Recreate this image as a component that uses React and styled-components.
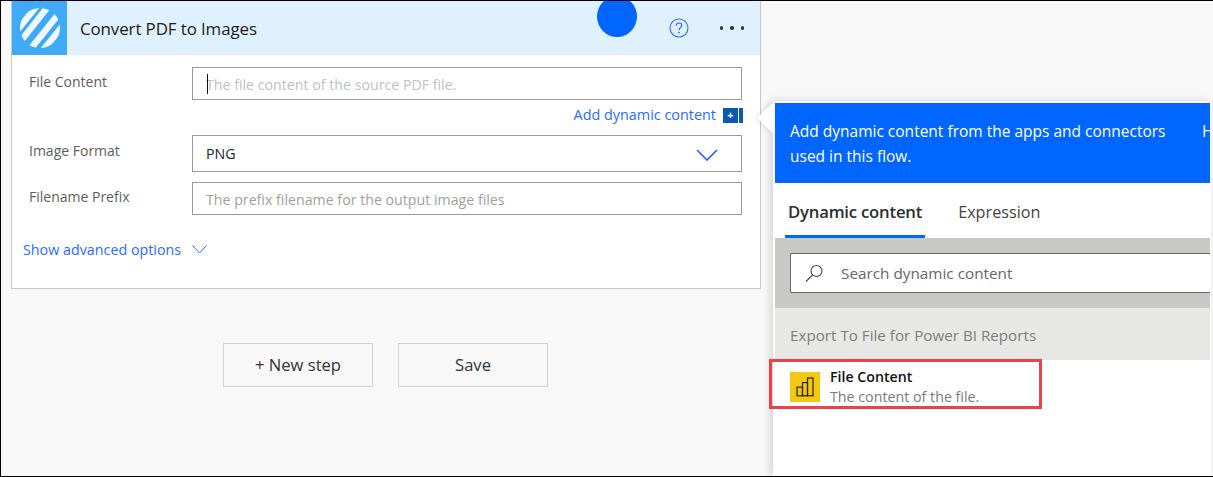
import React from "react";
import styled, { createGlobalStyle } from "styled-components";

const Global = createGlobalStyle`
  html, body { margin: 0; padding: 0; background: #f8f8f8; }
  * { box-sizing: border-box; }
`;

const font = `"Open Sans", "Noto Sans", "Liberation Sans", sans-serif`;

const Frame = styled.div`
  position: relative;
  width: 1213px;
  height: 477px;
  overflow: hidden;
  background: #f8f8f8;
  border: solid #000;
  border-width: 1px 0 1px 1px;
  font-family: ${font};
  padding: 0 0 0 10px;
`;

const Card = styled.section`
  width: 750px;
  height: 288px;
  background: #fff;
  border: 1px solid #c8c8c8;
  border-top: 0;
`;

const CardHeader = styled.header`
  position: relative;
  height: 54px;
  background: #dff0fe;
  display: flex;
  align-items: center;
  padding-right: 16px;
`;

const LogoBox = styled.div`
  width: 55px;
  height: 54px;
  background: #3eaaf9;
  display: flex;
  align-items: center;
  justify-content: center;
`;

const CardTitle = styled.h1`
  margin: 1px 0 0 13px;
  flex: 1;
  font-size: 16.9px;
  font-weight: 400;
  letter-spacing: -0.1px;
  color: #1c1c1c;
`;

const RedactDot = styled.div`
  position: absolute;
  left: 585px;
  top: -5px;
  width: 40px;
  height: 41px;
  border-radius: 50%;
  background: #0066ff;
`;

const HeaderActions = styled.div`
  display: flex;
  align-items: center;
  gap: 31px;
`;

const Dots = styled.div`
  display: flex;
  gap: 7px;
  span {
    width: 3.4px;
    height: 3.4px;
    border-radius: 50%;
    background: #333;
  }
`;

const Form = styled.div`
  padding: 12px 18px 0 17px;
`;

const Row = styled.div`
  display: grid;
  grid-template-columns: 163px 550px;
  margin-bottom: ${(p) => p.$mb || 0}px;
`;

const Label = styled.label`
  font-size: 14px;
  line-height: 18px;
  color: #5d5d5d;
  padding-top: ${(p) => p.$pt || 6}px;
`;

const Field = styled.div`
  height: ${(p) => p.$h || 33}px;
  border: 1px solid #999;
  background: #fff;
  display: flex;
  align-items: center;
  padding: ${(p) => (p.$value ? 0 : 2)}px 13px 0;
  font-size: 14.2px;
  color: ${(p) => (p.$value ? "#222" : "#a19f9d")};
  position: relative;
`;

const FaintText = styled.span`
  color: #c0bfc4;
`;

const Caret = styled.i`
  position: absolute;
  left: 14px;
  top: 6px;
  width: 1px;
  height: 20px;
  background: #111;
`;

const SelectChevron = styled.svg`
  position: absolute;
  right: 23px;
  top: 13px;
`;

const DynamicRow = styled.div`
  height: 35px;
  padding-bottom: 5px;
  display: flex;
  justify-content: flex-end;
  align-items: center;
  gap: 7px;
  width: 714px;
  font-size: 14.4px;
  color: #2b6bff;
  span:first-child {
    position: relative;
    top: -1px;
  }
`;

const DynBadge = styled.span`
  display: flex;
  height: 15px;
  gap: 1px;
  b {
    width: 15px;
    background: #0a5bb0;
    color: #fff;
    font-size: 11px;
    line-height: 14px;
    text-align: center;
  }
  em {
    width: 4px;
    background: #0a5bb0;
  }
`;

const AdvancedRow = styled.div`
  display: flex;
  align-items: center;
  gap: 11px;
  margin: 25px 0 0 -6px;
  font-size: 14.3px;
  color: #2b6bff;
`;

const Actions = styled.div`
  display: flex;
  gap: 25px;
  margin: 54px 0 0 212px;
`;

const StepButton = styled.button`
  width: 150px;
  height: 44px;
  background: #f8f8f8;
  border: 1px solid #d0d0d0;
  font-family: ${font};
  font-size: 16.6px;
  color: #333;
  padding: 0 0 2px;
`;

const Flyout = styled.aside`
  position: absolute;
  left: 772px;
  top: 100px;
  width: 438px;
  height: 375px;
  background: #fff;
  border-left: 2px solid #fff;
  box-shadow: -3px 0 8px rgba(0, 0, 0, 0.14);
  padding: 2px 1px 0 0;
  &::before {
    content: "";
    position: absolute;
    left: -14px;
    top: 6px;
    width: 22px;
    height: 22px;
    background: #fff;
    transform: rotate(45deg) scale(0.95);
    box-shadow: -2px 2px 5px rgba(0, 0, 0, 0.08);
  }
`;

const Banner = styled.div`
  position: relative;
  height: 80px;
  background: #0066ff;
  color: #fff;
  padding: 16px 0 0 15px;
  font-size: 15.5px;
  line-height: 25px;
  overflow: hidden;
  span {
    position: absolute;
    left: 427px;
    top: 16px;
  }
`;

const Tabs = styled.div`
  height: 55px;
  display: flex;
  padding-left: 10px;
  gap: 30px;
`;

const Tab = styled.div`
  height: 55px;
  padding: 17px 3px 0;
  font-size: ${(p) => (p.$active ? 16.7 : 16.2)}px;
  font-weight: ${(p) => (p.$active ? 600 : 400)};
  color: ${(p) => (p.$active ? "#2d2d2d" : "#444")};
  border-bottom: 3px solid ${(p) => (p.$active ? "#0066ff" : "transparent")};
  letter-spacing: ${(p) => (p.$active ? "-0.2px" : "0")};
  line-height: 24px;
`;

const SearchBand = styled.div`
  height: 70px;
  background: #c8c9c6;
  padding: 15px 0 0 15px;
`;

const SearchBox = styled.div`
  height: 40px;
  background: #fff;
  border: 1px solid #666;
  border-right: 0;
  border-radius: 2px 0 0 2px;
  display: flex;
  align-items: center;
  padding-left: 14px;
  gap: 17px;
  font-size: 15.3px;
  color: #666;
`;

const SectionBand = styled.div`
  height: 52px;
  background: #e7e8e6;
  padding: 17px 0 0 15px;
  font-size: 15.2px;
  line-height: 20px;
  color: #7d7d7d;
`;

const Item = styled.div`
  display: flex;
  gap: 10px;
  padding: 12px 0 0 15px;
`;

const ItemIcon = styled.div`
  width: 30px;
  height: 30px;
  background: #f2c811;
  display: flex;
  align-items: center;
  justify-content: center;
`;

const ItemText = styled.div`
  margin-top: -4px;
  strong {
    display: block;
    font-size: 14.2px;
    line-height: 18px;
    font-weight: 600;
    color: #111;
  }
  span {
    display: block;
    font-size: 14.25px;
    line-height: 22px;
    color: #7a7a7a;
  }
`;

const Highlight = styled.div`
  position: absolute;
  left: 768px;
  top: 358px;
  width: 273px;
  height: 50px;
  border: 3px solid #ef4248;
  pointer-events: none;
`;

const Chevron = ({ w, h, color, sw = 1 }) => (
  <svg width={w} height={h} viewBox={`0 0 ${w} ${h}`} fill="none" stroke={color} strokeWidth={sw}>
    <path d={`M0.5 0.5L${w / 2} ${h - 1}L${w - 0.5} 0.5`} />
  </svg>
);

export default function App() {
  return (
    <Frame>
      <Global />
      <Card>
        <CardHeader>
          <LogoBox>
            <svg width="40" height="40" viewBox="0 0 40 40">
              <defs>
                <clipPath id="disc">
                  <circle cx="20" cy="20" r="20" />
                </clipPath>
              </defs>
              <g clipPath="url(#disc)" stroke="#fff" strokeWidth="6.4" opacity="0.93">
                <path d="M-6 26L20 -6" />
                <path d="M-3 38L30 -4" />
                <path d="M8 44L42 2" />
                <path d="M20 46L46 14" />
              </g>
            </svg>
          </LogoBox>
          <CardTitle>Convert PDF to Images</CardTitle>
          <RedactDot />
          <HeaderActions>
            <svg width="20" height="20" viewBox="0 0 20 20" fill="none" stroke="#2b6bff">
              <circle cx="10" cy="10" r="9" strokeWidth="1.1" />
              <path d="M7.2 7.8C7.2 6 8.5 5 10 5C11.6 5 12.8 6 12.8 7.5C12.8 9.6 10 9.6 10 12.2" strokeWidth="1.2" />
              <circle cx="10" cy="14.6" r="0.9" fill="#2b6bff" stroke="none" />
            </svg>
            <Dots>
              <span />
              <span />
              <span />
            </Dots>
          </HeaderActions>
        </CardHeader>
        <Form>
          <Row>
            <Label>File Content</Label>
            <Field>
              <Caret />
              <FaintText>The file content of the source PDF file.</FaintText>
            </Field>
          </Row>
          <DynamicRow>
            <span>Add dynamic content</span>
            <DynBadge>
              <b>+</b>
              <em />
            </DynBadge>
          </DynamicRow>
          <Row $mb={10}>
            <Label $pt={7}>Image Format</Label>
            <Field $h={37} $value>
              PNG
              <SelectChevron width="22" height="12" viewBox="0 0 22 12" fill="none" stroke="#2266ee" strokeWidth="1.6">
                <path d="M1 1L11 11L21 1" />
              </SelectChevron>
            </Field>
          </Row>
          <Row>
            <Label>Filename Prefix</Label>
            <Field>The prefix filename for the output image files</Field>
          </Row>
          <AdvancedRow>
            Show advanced options
            <Chevron w={15} h={9} color="#2b6bff" />
          </AdvancedRow>
        </Form>
      </Card>
      <Actions>
        <StepButton>+ New step</StepButton>
        <StepButton>Save</StepButton>
      </Actions>
      <Flyout>
        <Banner>
          Add dynamic content from the apps and connectors
          <br />
          used in this flow.
          <span>H</span>
        </Banner>
        <Tabs>
          <Tab $active>Dynamic content</Tab>
          <Tab>Expression</Tab>
        </Tabs>
        <SearchBand>
          <SearchBox>
            <svg width="19" height="19" viewBox="0 0 19 19" fill="none" stroke="#444" strokeWidth="1.1">
              <circle cx="11.5" cy="7" r="5.5" />
              <path d="M7.5 11L1 17.5" />
            </svg>
            Search dynamic content
          </SearchBox>
        </SearchBand>
        <SectionBand>Export To File for Power BI Reports</SectionBand>
        <Item>
          <ItemIcon>
            <svg width="18" height="20" viewBox="0 0 18 20" fill="none" stroke="#2a2400" strokeWidth="1.2">
              <rect x="1" y="10.2" width="5.5" height="8.6" />
              <rect x="6.5" y="5.6" width="5" height="13.2" />
              <rect x="11.5" y="1" width="5.5" height="17.8" />
            </svg>
          </ItemIcon>
          <ItemText>
            <strong>File Content</strong>
            <span>The content of the file.</span>
          </ItemText>
        </Item>
      </Flyout>
      <Highlight />
    </Frame>
  );
}
